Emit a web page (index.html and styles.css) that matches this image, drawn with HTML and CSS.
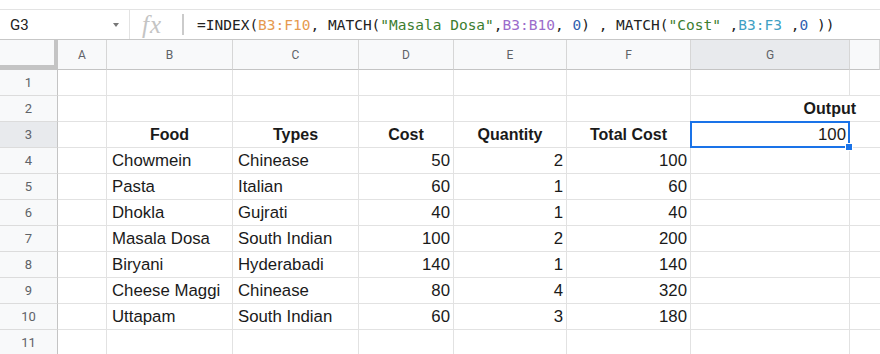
FILE: index.html
```html
<!DOCTYPE html>
<html>
<head>
<title>Sheet</title>
<link rel="stylesheet" href="styles.css">
</head>
<body>
<div class="top-gap"></div>
<div class="formula-bar">
	<div class="name-box"><span class="cell-ref">G3</span><span class="caret"></span></div>
	<div class="fx">fx</div>
	<div class="formula">=INDEX(<span class="r1">B3:F10</span>, MATCH(<span class="str">"Masala Dosa"</span>,<span class="r2">B3:B10</span>, <span class="n">0</span>) , MATCH(<span class="str">"Cost"</span> ,<span class="r3">B3:F3</span> ,<span class="n">0</span> ))</div>
</div>
<div class="sheet">
	<!-- column headers -->
	<div class="corner"></div>
	<div class="ch">A</div><div class="ch">B</div><div class="ch">C</div><div class="ch">D</div>
	<div class="ch">E</div><div class="ch">F</div><div class="ch active">G</div><div class="ch last"></div>

	<div class="rh">1</div>
	<div class="c"></div><div class="c"></div><div class="c"></div><div class="c"></div>
	<div class="c"></div><div class="c"></div><div class="c"></div><div class="c last"></div>

	<div class="rh">2</div>
	<div class="c"></div><div class="c"></div><div class="c"></div><div class="c"></div>
	<div class="c"></div><div class="c"></div><div class="c num b overflow"><span>Output</span></div><div class="c last"></div>

	<div class="rh active">3</div>
	<div class="c"></div><div class="c hd">Food</div><div class="c hd">Types</div><div class="c hd">Cost</div>
	<div class="c hd">Quantity</div><div class="c hd">Total Cost</div><div class="c num sel">100<span class="handle"></span></div><div class="c last"></div>

	<div class="rh">4</div>
	<div class="c"></div><div class="c">Chowmein</div><div class="c">Chinease</div><div class="c num">50</div>
	<div class="c num">2</div><div class="c num">100</div><div class="c"></div><div class="c last"></div>

	<div class="rh">5</div>
	<div class="c"></div><div class="c">Pasta</div><div class="c">Italian</div><div class="c num">60</div>
	<div class="c num">1</div><div class="c num">60</div><div class="c"></div><div class="c last"></div>

	<div class="rh">6</div>
	<div class="c"></div><div class="c">Dhokla</div><div class="c">Gujrati</div><div class="c num">40</div>
	<div class="c num">1</div><div class="c num">40</div><div class="c"></div><div class="c last"></div>

	<div class="rh">7</div>
	<div class="c"></div><div class="c">Masala Dosa</div><div class="c">South Indian</div><div class="c num">100</div>
	<div class="c num">2</div><div class="c num">200</div><div class="c"></div><div class="c last"></div>

	<div class="rh">8</div>
	<div class="c"></div><div class="c">Biryani</div><div class="c">Hyderabadi</div><div class="c num">140</div>
	<div class="c num">1</div><div class="c num">140</div><div class="c"></div><div class="c last"></div>

	<div class="rh">9</div>
	<div class="c"></div><div class="c">Cheese Maggi</div><div class="c">Chinease</div><div class="c num">80</div>
	<div class="c num">4</div><div class="c num">320</div><div class="c"></div><div class="c last"></div>

	<div class="rh">10</div>
	<div class="c"></div><div class="c">Uttapam</div><div class="c">South Indian</div><div class="c num">60</div>
	<div class="c num">3</div><div class="c num">180</div><div class="c"></div><div class="c last"></div>

	<div class="rh">11</div>
	<div class="c"></div><div class="c"></div><div class="c"></div><div class="c"></div>
	<div class="c"></div><div class="c"></div><div class="c"></div><div class="c last"></div>
</div>
</body>
</html>
```
FILE: styles.css
```css
body {
	margin: 0;
	background: #fff;
	font-family: "Liberation Sans", Arial, sans-serif;
	overflow: hidden;
}
.top-gap {
	height: 9px;
	border-bottom: 1px solid #e3e3e3;
}

/* formula bar */
.formula-bar {
	display: flex;
	align-items: center;
	height: 30px;
	box-sizing: border-box;
	border-bottom: 1px solid #c7c7c7;
	white-space: nowrap;
}
.name-box {
	display: flex;
	align-items: center;
	width: 130px;
	height: 100%;
	box-sizing: border-box;
	padding-left: 10px;
	border-right: 1px solid #e3e3e3;
	font-family: Roboto, "Liberation Sans", sans-serif;
	font-size: 15px;
	color: #222;
}
.caret {
	margin-left: auto;
	margin-right: 10px;
	width: 0;
	height: 0;
	border-top: 4px solid #777;
	border-left: 3px solid transparent;
	border-right: 3px solid transparent;
}
.fx {
	width: 54px;
	height: 21px;
	line-height: 21px;
	box-sizing: border-box;
	padding-left: 12px;
	border-right: 2px solid #cbcbcb;
	font-family: "Liberation Serif", serif;
	font-style: italic;
	font-size: 25px;
	letter-spacing: 1px;
	color: #c4c4c4;
}
.formula {
	padding-left: 13px;
	font-family: "DejaVu Sans Mono", "Liberation Mono", monospace;
	font-size: 14.5px;
	color: #222;
}
.r1 { color: #e69a4f; }
.r2 { color: #9b6ccb; }
.r3 { color: #3f9fc4; }
.str { color: #3c7d2f; }
.n { color: #2f5fb0; }

/* grid */
.sheet {
	display: grid;
	grid-template-columns: 58px 49px 126px 126px 95px 113px 124px 159px 1fr;
	grid-template-rows: 30px repeat(11, 26px);
}
.corner {
	background: #f8f9fa;
	border-right: 4px solid #c4c4c4;
	border-bottom: 5px solid #c4c4c4;
}
.ch {
	display: flex;
	align-items: center;
	justify-content: center;
	background: #f8f9fa;
	border-right: 1px solid #d6d6d6;
	border-bottom: 1px solid #c4c4c4;
	font-family: Roboto, "Liberation Sans", sans-serif;
	font-size: 12px;
	color: #5f6368;
}
.rh {
	display: flex;
	align-items: center;
	justify-content: center;
	background: #f8f9fa;
	border-right: 1px solid #c4c4c4;
	border-bottom: 1px solid #dcdcdc;
	font-family: Roboto, "Liberation Sans", sans-serif;
	font-size: 13px;
	color: #5f6368;
}
.ch.active, .rh.active {
	background: #e8eaed;
}
.c {
	display: flex;
	align-items: flex-end;
	padding: 0 4px 3px 5px;
	border-right: 1px solid #e2e2e2;
	border-bottom: 1px solid #e2e2e2;
	font-size: 16.8px;
	line-height: 19px;
	color: #1a1a1a;
	white-space: nowrap;
	min-width: 0;
}
.c.last {
	border-right: none;
}
.num {
	justify-content: flex-end;
	padding-right: 3px;
}
.b, .hd {
	font-weight: bold;
	font-size: 16px;
}
.hd {
	justify-content: center;
	padding-left: 0;
	padding-right: 0;
}
.overflow {
	border-right-color: transparent;
}
.overflow span {
	margin-right: -10px;
}

/* selected cell */
.sel {
	position: relative;
}
.sel::after {
	content: "";
	position: absolute;
	left: -1px;
	top: -1px;
	right: -1px;
	bottom: -1px;
	border: 2px solid #1a73e8;
}
.handle {
	position: absolute;
	right: -4px;
	bottom: -4px;
	width: 6px;
	height: 6px;
	background: #1a73e8;
	border: 1px solid #fff;
	z-index: 1;
}
```
